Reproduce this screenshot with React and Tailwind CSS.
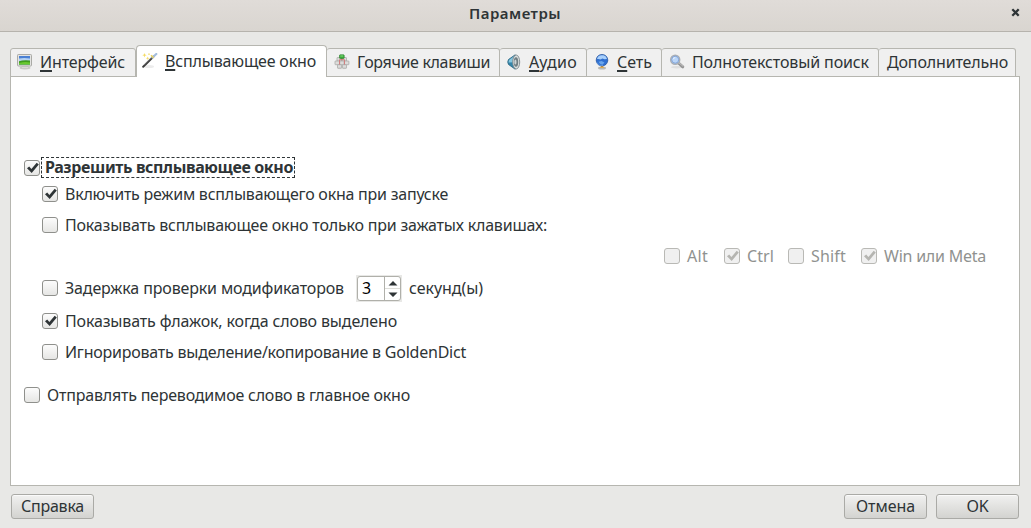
import React, { useLayoutEffect, useRef, useState } from "react";

/* Text set to a fixed measure: tracking is computed so the run fills its box. */
function Label({ text, accel, className }) {
  const inner = useRef(null);
  const outer = useRef(null);
  const [tracking, setTracking] = useState(0);
  useLayoutEffect(() => {
    const natural = inner.current.getBoundingClientRect().width;
    const wanted = outer.current.getBoundingClientRect().width;
    setTracking((wanted - natural) / text.length);
  }, [text]);
  return (
    <span ref={outer} className={`block shrink-0 whitespace-nowrap ${className}`}>
      <span ref={inner} style={{ letterSpacing: `${tracking}px` }}>
        {accel ? (
          <>
            <span className="underline decoration-2 underline-offset-[2px] [text-decoration-skip-ink:none]">{text[0]}</span>
            {text.slice(1)}
          </>
        ) : (
          text
        )}
      </span>
    </span>
  );
}

function Check({ checked, disabled }) {
  const box = disabled
    ? "border-[#b9b9b5] bg-[#f0f0f0]"
    : "border-[#8f908c] bg-linear-to-b from-[#fcfcfc] to-[#e6e6e4]";
  return (
    <span className={`block size-4 shrink-0 rounded-[3px] border ${box}`}>
      {checked && (
        <svg viewBox="0 0 14 14" className="block size-[14px] overflow-visible">
          <path
            d="M2 7.200 4.200 5.400 6.400 8.100 11.700 1.800 13.800 3.500 6.700 12Z"
            fill={disabled ? "#b5b5b1" : "#2e3436"}
          />
        </svg>
      )}
    </span>
  );
}

function Option({ checked, disabled, text, labelClass, className = "" }) {
  return (
    <div className={`flex h-5 items-center gap-2 ${className}`}>
      <Check checked={checked} disabled={disabled} />
      <Label text={text} className={labelClass} />
    </div>
  );
}

function MonitorIcon() {
  return (
    <svg viewBox="0 0 16 16" className="block size-4">
      <ellipse cx="8" cy="14" rx="5.500" ry="1.400" fill="#c9c9c5" />
      <path d="M5 12h6v2H5z" fill="#dadad6" />
      <rect x="0.500" y="0.500" width="14" height="11.500" rx="0.800" fill="#e4e4e2" stroke="#aaaaa6" />
      <rect x="2" y="2" width="11" height="8.500" fill="#4a80d4" />
      <path d="M2 4.500Q7 3.500 13 4.500V8H2Z" fill="#b5d2f2" />
      <path d="M2 7.300Q6 5.800 13 6.500V10.500H2Z" fill="#3f9a1e" />
      <path d="M2 9Q8 7.500 13 8.500V10.500H2Z" fill="#69c92e" />
    </svg>
  );
}

function WandIcon() {
  return (
    <svg viewBox="0 0 16 16" className="block size-4">
      <ellipse cx="7" cy="13.500" rx="5" ry="1.500" fill="#ececec" />
      <path d="M1.200 13.800 11.500 3.500" stroke="#3c3c3c" strokeWidth="2" strokeLinecap="round" />
      <path d="M2 12.200 11 3.200" stroke="#929292" strokeWidth="0.600" />
      <path d="M10.500 4.500 14.300 1" stroke="#a3bddd" strokeWidth="2.200" strokeLinecap="round" />
      <path d="M9 2.200 11.500 4.800" stroke="#e8d15c" strokeWidth="1.600" />
      <path d="m2.500 0 .6 1.600 1.600.6-1.600.6-.6 1.600-.6-1.600L.3 2.200l1.600-.6ZM5.700 3.500l.5 1.300 1.300.5-1.300.5-.5 1.300-.5-1.300-1.300-.5 1.300-.5Z" fill="#f5dc65" />
      <circle cx="7" cy="1.200" r="0.900" fill="#f5e486" />
    </svg>
  );
}

function KeysIcon() {
  return (
    <svg viewBox="0 0 16 16" className="block size-4">
      <ellipse cx="8" cy="14" rx="5" ry="1.300" fill="#dededb" />
      <g fill="#dcdcda" stroke="#a4a4a0" strokeWidth="0.700">
        <rect x="3" y="3.500" width="4.500" height="3.700" rx="0.500" />
        <rect x="8" y="3.500" width="4.500" height="3.700" rx="0.500" />
        <rect x="1" y="7" width="4.500" height="3.700" rx="0.500" />
        <rect x="5.700" y="7" width="4.500" height="3.700" rx="0.500" />
        <rect x="10.400" y="7" width="4.500" height="3.700" rx="0.500" />
        <rect x="3.500" y="10.700" width="4" height="3.500" rx="0.500" />
        <rect x="8.500" y="10.700" width="4" height="3.500" rx="0.500" />
      </g>
      <path d="M7.800 4v1.700M5.500 10.500V5.700h5v4.800" stroke="#d57878" strokeWidth="0.900" fill="none" />
      <rect x="5.500" y="0.800" width="4.700" height="3.700" rx="0.700" fill="#3aaa3a" stroke="#267b29" strokeWidth="0.600" />
      <path d="M6.300 1.500h3v1h-3z" fill="#86dd7a" />
    </svg>
  );
}

function SpeakerIcon() {
  return (
    <svg viewBox="0 0 16 16" className="block size-4">
      <path d="M2.500 5.500 9.200.8v14.400L2.500 10.500Q1 8 2.500 5.500Z" fill="#3485aa" stroke="#28627e" strokeWidth="0.800" />
      <path d="M3 6 8 2.300v6L2.500 8.500Z" fill="#86c6df" />
      <ellipse cx="10.200" cy="8" rx="3.500" ry="7" fill="#d9dddd" stroke="#7e898d" strokeWidth="0.900" />
      <ellipse cx="10" cy="8" rx="2.200" ry="4.800" fill="#707d82" />
      <ellipse cx="9.400" cy="8" rx="1.100" ry="2.500" fill="#cbd3d5" />
    </svg>
  );
}

function GlobeIcon() {
  return (
    <svg viewBox="0 0 16 16" className="block size-4">
      <ellipse cx="8" cy="14" rx="4" ry="1.500" fill="#b8b8b4" />
      <path d="M7 11h2v2H7z" fill="#d3912d" />
      <ellipse cx="8" cy="13.300" rx="2.200" ry="0.800" fill="#e6aa45" />
      <circle cx="8" cy="6.200" r="5.800" fill="#2f6fd0" stroke="#21509c" strokeWidth="0.700" />
      <path d="M3 5Q3.500 2 7 1.200L9.500 1.300Q12.500 2 13 5L10.500 5.200 8.500 4.500 6.500 5.500 4.500 5Z" fill="#a9d0fb" />
      <path d="M4.500 7.800 7.500 7 10.500 8.500 8.500 10.700 6 9.800Z" fill="#6ba6ec" />
      <path d="M2.800 8.500Q5 12.200 9 11.500" stroke="#74aff1" fill="none" strokeWidth="0.700" />
    </svg>
  );
}

function SearchIcon() {
  return (
    <svg viewBox="0 0 16 16" className="block size-4">
      <ellipse cx="8" cy="13.200" rx="6" ry="1.300" fill="#dedede" />
      <path d="m9.500 9 4.300 3.800" stroke="#929292" strokeWidth="3" strokeLinecap="round" />
      <path d="m10 8.800 4 3.500" stroke="#c8c8c8" strokeWidth="1" strokeLinecap="round" />
      <circle cx="6.200" cy="5.700" r="4.500" fill="#b6d0f3" stroke="#aaaeb4" strokeWidth="1.500" />
      <circle cx="6.200" cy="5.700" r="3.500" fill="#bad5f8" stroke="#7599d1" strokeWidth="0.800" />
      <path d="M3.600 5.500Q4 3.200 6.600 3.100 5.700 5 3.600 5.500Z" fill="#edf5ff" />
    </svg>
  );
}

function Tab({ icon, text, accel, active, className, labelClass }) {
  const look = active
    ? "z-10 h-8 bg-white border-l border-r rounded-t-[4px] pb-px"
    : "h-[29px] bg-[#f0f0f0] border-b border-r rounded-t-[3px] pb-0.5";
  return (
    <div className={`flex shrink-0 items-center border-t border-[#b6b6b0] ${look} ${className}`}>
      {icon && <span className="mr-[7px] block">{icon}</span>}
      <Label text={text} accel={accel} className={labelClass} />
    </div>
  );
}

function Button({ text, className, labelClass }) {
  return (
    <button
      className={`flex h-[25px] items-center justify-center rounded-[3px] border border-[#aaaaa6] bg-linear-to-b from-[#f1f1f0] to-[#d3d3d0] pb-0.5 shadow-[inset_0_1px_0_#fafafa] ${className}`}
    >
      <Label text={text} className={labelClass} />
    </button>
  );
}

export default function App() {
  return (
    <div className="flex h-[528px] w-[1031px] flex-col overflow-hidden bg-[#e8e8e6] font-['Noto_Sans',sans-serif] text-[16px] leading-5 text-[#2e3436]">
      <header className="grid h-8 shrink-0 grid-cols-[1fr_auto_1fr] items-center border-b border-[#b6b3ad] bg-linear-to-b from-[#e0dcd8] to-[#d9d5d0] pb-1.5 pr-[11px]">
        <span />
        <Label text="Параметры" className="ml-[10px] w-[92px] text-[15px] font-semibold" />
        <svg viewBox="0 0 9 9" className="size-[9px] justify-self-end">
          <path d="M1.300 1.300 7.700 7.700M7.700 1.300 1.300 7.700" stroke="#2e3436" strokeWidth="2.300" />
        </svg>
      </header>

      <nav className="mt-[13px] flex h-8 shrink-0 items-end pl-[10px]">
        <Tab icon={<MonitorIcon />} text="Интерфейс" accel className="w-[126px] border-l pl-[6px]" labelClass="w-[85px]" />
        <Tab icon={<WandIcon />} text="Всплывающее окно" accel active className="w-[191px] pl-[5px]" labelClass="w-[151px]" />
        <Tab icon={<KeysIcon />} text="Горячие клавиши" className="w-[173px] pl-[7px]" labelClass="w-[133px]" />
        <Tab icon={<SpeakerIcon />} text="Аудио" accel className="w-[87px] pl-[6px]" labelClass="w-[48px]" />
        <Tab icon={<GlobeIcon />} text="Сеть" accel className="w-[75px] pl-[7px]" labelClass="w-[35px]" />
        <Tab icon={<SearchIcon />} text="Полнотекстовый поиск" className="w-[217px] pl-[7px]" labelClass="w-[177px]" />
        <Tab text="Дополнительно" className="w-[137px] pl-[8px]" labelClass="w-[121px]" />
      </nav>

      <main className="-mt-px ml-[10px] flex h-[410px] w-[1010px] shrink-0 flex-col border border-[#b6b6b0] bg-white pl-[13px]">
        <div className="mt-[80px] flex h-[21px] items-center gap-px">
          <Check checked />
          <div className="flex h-[21px] w-[254px] items-center border border-dashed border-[#2e3436] pb-0.5 pl-[3px] font-bold">
            <Label text="Разрешить всплывающее окно" className="w-[248px]" />
          </div>
        </div>
        <div className="flex flex-col pl-[18px]">
          <Option checked text="Включить режим всплывающего окна при запуске" className="mt-[6px]" labelClass="w-[383px] -ml-px" />
          <Option text="Показывать всплывающее окно только при зажатых клавишах:" className="mt-[11px]" labelClass="w-[482px] -ml-px" />
          <div className="mt-[11px] flex pl-[622px] text-[#909290]">
            <Option disabled text="Alt" className="w-[60px]" labelClass="w-[21px] -ml-px" />
            <Option disabled checked text="Ctrl" className="w-[64px]" labelClass="w-[27px] -ml-px" />
            <Option disabled text="Shift" className="w-[73px]" labelClass="w-[35px] -ml-px" />
            <Option disabled checked text="Win или Meta" labelClass="w-[102px] -ml-px" />
          </div>
          <div className="mt-[9px] flex h-[26px] items-center">
            <Option text="Задержка проверки модификаторов" className="-mt-px" labelClass="w-[279px] -ml-px" />
            <div className="ml-[12px] flex h-[27px] w-[46px] shrink-0 bg-[#e8e8e6] p-px">
              <div className="flex flex-1 rounded-[3px] border border-[#b0b0aa] bg-white">
                <span className="w-[27px] border-r border-[#b0b0aa] pl-1 leading-[22px] text-black">3</span>
                <svg viewBox="0 0 15 23" className="h-[23px] w-[15px]">
                  <path d="M0 11.500h15" stroke="#deded9" />
                  <path d="M3.500 8.500h9L8 4ZM3.500 15.500h9L8 20Z" fill="#2e3436" />
                </svg>
              </div>
            </div>
            <Label text="секунд(ы)" className="ml-[7px] w-[74px]" />
          </div>
          <Option checked text="Показывать флажок, когда слово выделено" className="mt-[10px]" labelClass="w-[332px] -ml-px" />
          <Option text="Игнорировать выделение/копирование в GoldenDict" className="mt-[11px]" labelClass="w-[401px] -ml-px" />
        </div>
        <Option text="Отправлять переводимое слово в главное окно" className="mt-[23px]" labelClass="w-[363px] -ml-px" />
      </main>

      <footer className="mt-2 flex pl-[11px] pr-[12px]">
        <Button text="Справка" className="w-[83px]" labelClass="w-[63px]" />
        <Button text="Отмена" className="ml-auto w-[83px]" labelClass="w-[59px]" />
        <Button text="OK" className="ml-[9px] w-[83px]" labelClass="w-[22px]" />
      </footer>
    </div>
  );
}
